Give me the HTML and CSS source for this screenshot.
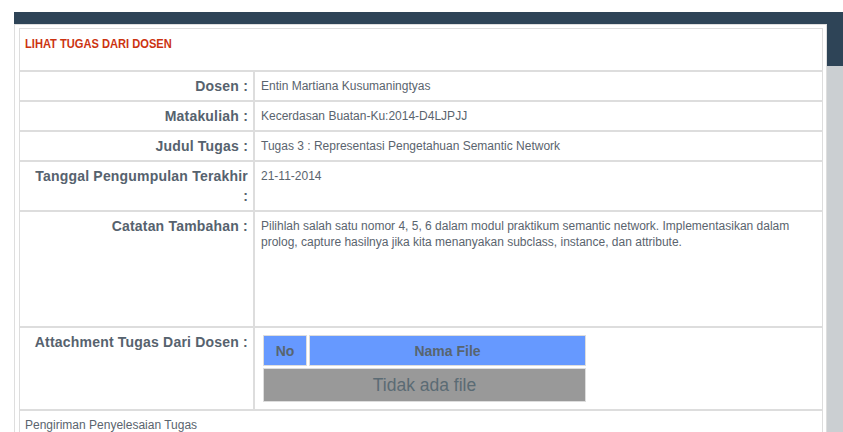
FILE: index.html
```html
<!DOCTYPE html>
<html>
<head>
<meta charset="utf-8">
<link rel="stylesheet" href="styles.css">
<title>Lihat Tugas Dari Dosen</title>
</head>
<body>
<div class="frame">
  <div class="panel">
    <table class="detail">
      <colgroup>
        <col class="col-label">
        <col class="col-value">
      </colgroup>
      <tr class="head-row">
        <td colspan="2" class="title"><span class="title-text">LIHAT TUGAS DARI DOSEN</span></td>
      </tr>
      <tr>
        <td class="label">Dosen :</td>
        <td class="value">Entin Martiana Kusumaningtyas</td>
      </tr>
      <tr>
        <td class="label">Matakuliah :</td>
        <td class="value">Kecerdasan Buatan-Ku:2014-D4LJPJJ</td>
      </tr>
      <tr>
        <td class="label">Judul Tugas :</td>
        <td class="value">Tugas 3 : Representasi Pengetahuan Semantic Network</td>
      </tr>
      <tr>
        <td class="label">Tanggal Pengumpulan Terakhir :</td>
        <td class="value">21-11-2014</td>
      </tr>
      <tr class="note-row">
        <td class="label">Catatan Tambahan :</td>
        <td class="value">Pilihlah salah satu nomor 4, 5, 6 dalam modul praktikum semantic network. Implementasikan dalam prolog, capture hasilnya jika kita menanyakan subclass, instance, dan attribute.</td>
      </tr>
      <tr>
        <td class="label">Attachment Tugas Dari Dosen :</td>
        <td class="value attach">
          <table class="files">
            <tr>
              <th class="no">No</th>
              <th class="name">Nama File</th>
            </tr>
            <tr>
              <td colspan="2" class="empty">Tidak ada file</td>
            </tr>
          </table>
        </td>
      </tr>
      <tr>
        <td colspan="2" class="value plain">Pengiriman Penyelesaian Tugas</td>
      </tr>
    </table>
  </div>
</div>
</body>
</html>
```

FILE: styles.css
```css
html, body {
  margin: 0;
  padding: 0;
  background: #ffffff;
}

body {
  padding-top: 12px;
  font-family: "Liberation Sans", Arial, sans-serif;
}

.frame {
  margin-left: 14px;
  background: linear-gradient(to bottom, #2e4457 0, #2e4457 54px, #cbcfd2 54px, #cbcfd2 100%);
  padding-top: 12px;
  padding-bottom: 40px;
}

.panel {
  width: 813px;
  box-sizing: border-box;
  background: #ffffff;
  border: 1px solid #dedede;
  padding: 3px 3px 4px 4px;
}

.detail {
  width: 804px;
  border-collapse: separate;
  border-spacing: 0;
  table-layout: fixed;
}

.col-label {
  width: 235px;
}

.detail > tbody > tr > td {
  border: 1px solid #dddddd;
  vertical-align: top;
}

.title {
  height: 34px;
  padding: 7px 5px 0 5px;
  font-weight: bold;
  font-size: 13px;
  line-height: 16px;
  color: #cc3311;
}

.title-text {
  display: inline-block;
  transform: scaleX(0.855);
  transform-origin: left center;
  white-space: nowrap;
}

.label {
  padding: 4px 5px 4px 13px;
  text-align: right;
  font-weight: bold;
  font-size: 14px;
  line-height: 20px;
  letter-spacing: 0.2px;
  color: #56626e;
}

.value {
  padding: 6px 6px 5px 6px;
  font-size: 12px;
  line-height: 16px;
  color: #5a646e;
}

.value.attach {
  padding-top: 5px;
}

.note-row > td {
  height: 103px;
}

.plain {
  padding-left: 5px;
}

.files {
  border-collapse: separate;
  border-spacing: 2px;
  width: 327px;
  table-layout: fixed;
}

.files th,
.files td {
  border: 1px solid #dddddd;
  padding: 0;
  text-align: center;
  color: #58656f;
}

.files th {
  background: #6699ff;
  height: 29px;
  font-size: 14px;
  font-weight: bold;
}

.files th.no {
  width: 42px;
}

.files td.empty {
  background: #999999;
  height: 32px;
  font-size: 17.5px;
  color: #5b6b74;
}
```
